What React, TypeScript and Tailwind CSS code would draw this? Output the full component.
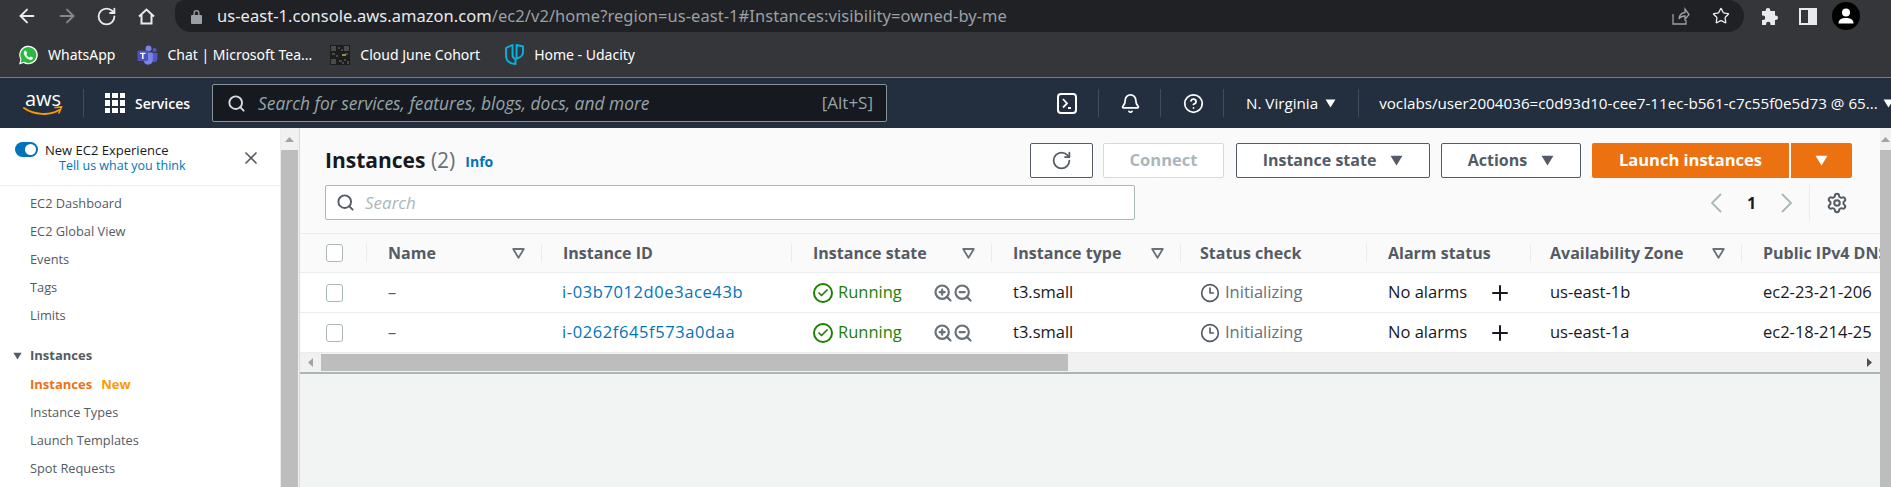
import { ArrowLeft, ArrowRight, RotateCw, Search, X, Plus, Settings, Bell, CircleHelp, Check, Clock3, Star, ZoomIn, ZoomOut } from "lucide-react";

const consoleFont = { fontFamily: '"Open Sans", "Noto Sans", sans-serif' };

const columns = "grid grid-cols-[66px_175px_250px_200px_189px_186px_164px_211px_1fr]";

const sideTop = ["EC2 Dashboard", "EC2 Global View", "Events", "Tags", "Limits"];
const sideBottom = ["Instance Types", "Launch Templates", "Spot Requests"];

const rows = [
  { id: "i-03b7012d0e3ace43b", zone: "us-east-1b", dns: "ec2-23-21-206" },
  { id: "i-0262f645f573a0daa", zone: "us-east-1a", dns: "ec2-18-214-25" },
];

function Caret({ className }: { className: string }) {
  return (
    <svg aria-hidden="true" className={className} viewBox="0 0 12 10">
      <path d="M0.5 0.5h11L6 9.5Z" fill="currentColor" />
    </svg>
  );
}

function FilterMark() {
  return (
    <svg aria-hidden="true" className="h-[11px] w-[13px] text-[#687078]" viewBox="0 0 13 11" fill="none">
      <path d="M1.2 1h10.6L6.5 9.8Z" stroke="currentColor" strokeWidth="1.8" strokeLinejoin="round" />
    </svg>
  );
}

function Checkbox() {
  return <span className="block h-[18px] w-[17px] rounded-[3px] border border-[#aab7b8] bg-white" />;
}

function HeaderCell({ label, filter, tight }: { label: string; filter?: boolean; tight?: boolean }) {
  return (
    <div className={`flex h-[18px] items-center justify-between whitespace-nowrap border-l border-[#eaeded] pr-[16px] ${tight ? "pl-[19px]" : "pl-[21px]"}`}>
      <span>{label}</span>
      {filter && <FilterMark />}
    </div>
  );
}

function Chevron({ flip }: { flip?: boolean }) {
  return (
    <svg aria-hidden="true" className="h-[20px] w-[11px] text-[#aab7b8]" viewBox="0 0 11 20" fill="none">
      <path d={flip ? "M1 1l9 9-9 9" : "M10 1l-9 9 9 9"} stroke="currentColor" strokeWidth="1.8" />
    </svg>
  );
}

function WhatsAppIcon() {
  return (
    <svg aria-hidden="true" className="h-[20px] w-[20px]" viewBox="0 0 20 20">
      <path d="M1 19.4 2.4 14.6A9.3 9.3 0 1 1 5.6 17.9Z" fill="#fff" />
      <path d="M2.5 17.8 3.6 14.3A8 8 0 1 1 6.1 16.8Z" fill="#2bb741" />
      <path d="M7.3 5.5c-.4 0-1.5.8-1.5 2.4 0 2.5 3.4 6.5 6.6 6.9 1.5.1 2.5-1 2.6-1.9 0-.4-2-1.5-2.4-1.4-.4.2-.8 1.1-1.2 1.1-.7 0-3-2.1-3.1-3-.1-.4.8-.9.8-1.4 0-.3-.8-2.6-1.8-2.7Z" fill="#fff" />
    </svg>
  );
}

function TeamsIcon() {
  return (
    <svg aria-hidden="true" className="h-[20px] w-[21px]" viewBox="0 0 21 20">
      <circle cx="11.5" cy="3.6" r="3" fill="#7b83eb" />
      <circle cx="17.6" cy="5" r="2.1" fill="#5059c9" />
      <path d="M14 8h6.4v6a3.2 3.2 0 0 1-5.5 2.2Z" fill="#5059c9" />
      <path d="M6.5 7.5h9.3V15a4.6 4.6 0 0 1-9.3 0Z" fill="#7b83eb" />
      <rect x="0.5" y="5.5" width="10.5" height="10.5" rx="1" fill="#4b53bc" />
      <path d="M3 7.8h5.5v1.3H6.500v4.900H5V9.100H3Z" fill="#fff" />
    </svg>
  );
}

function QrIcon() {
  return (
    <svg aria-hidden="true" className="h-[20px] w-[20px]" viewBox="0 0 20 20" shapeRendering="crispEdges">
      <rect width="20" height="20" fill="#1d1d1d" />
      <path d="M1 1h5v5H1ZM14 1h5v5h-5ZM1 14h5v5H1ZM8 2h2v2H8ZM11 4h2v2h-2ZM2 8h3v2H2ZM6 10h2v2H6ZM15 8h3v2h-3ZM9 15h3v2H9ZM14 14h2v2h-2ZM17 16h2v3h-2ZM12 17h2v2h-2Z" fill="#4a4a4a" />
      <rect x="12" y="9" width="4" height="2" fill="#7e9c46" />
    </svg>
  );
}

function UdacityIcon() {
  return (
    <svg aria-hidden="true" className="h-[21px] w-[21px]" viewBox="0 0 21 21" fill="none" stroke="#02b3e4" strokeWidth="1.9" strokeLinejoin="round">
      <path d="M2 4 8.500 1v9.500c0 2.500 1 4 3 4.500V20c-6-.5-9.500-3.500-9.500-8.500Z" />
      <path d="M19 2.500 12.500 1v13.500c0 0 6.500-1.500 6.500-6Z" />
    </svg>
  );
}

function AwsLogo() {
  return (
    <div className="relative flex h-[26px] w-[40px] flex-col items-center">
      <span className="text-[20px] font-normal leading-[17px] text-white" style={{ fontFamily: '"Open Sans", sans-serif' }}>aws</span>
      <svg aria-hidden="true" className="absolute bottom-0 left-0 h-[10px] w-[40px]" viewBox="0 0 40 10" fill="none">
        <path d="M1 2c10 7 26 8 35 2" stroke="#f90" strokeWidth="2" strokeLinecap="round" />
        <path d="M32 1.500 38.500 1 36 7" stroke="#f90" strokeWidth="1.600" strokeLinecap="round" />
      </svg>
    </div>
  );
}

function GridIcon() {
  return (
    <span className="grid h-[20px] w-[20px] grid-cols-3 gap-[2px]">
      {Array.from({ length: 9 }).map((_, i) => (
        <span className="bg-white" key={i} />
      ))}
    </span>
  );
}

function NavSep() {
  return <span className="block h-[28px] w-px bg-[#414d5c]" />;
}

export default function App() {
  return (
    <div className="flex h-[487px] w-[1891px] flex-col overflow-hidden bg-white" style={consoleFont}>
      {/* browser chrome */}
      <div className="flex h-[32px] items-center bg-[#35363a] text-white" style={{ fontFamily: '"Noto Sans", sans-serif' }}>
        <div className="flex w-[175px] items-center pl-[16px]">
          <ArrowLeft className="h-[22px] w-[22px] text-[#e8eaed]" strokeWidth={2.1} />
          <ArrowRight className="ml-[18px] h-[22px] w-[22px] text-[#85878a]" strokeWidth={2.1} />
          <RotateCw className="ml-[18px] h-[21px] w-[21px] text-[#e8eaed]" strokeWidth={2.1} />
          <svg aria-hidden="true" className="ml-[20px] h-[19px] w-[19px] text-[#e8eaed]" viewBox="0 0 19 19" fill="none">
            <path d="M2 9.500 9.500 2.500 17 9.500M4.500 8v8.500h10V8" stroke="currentColor" strokeWidth="2" />
          </svg>
        </div>
        <div className="flex h-[32px] w-[1569px] items-center rounded-b-[18px] rounded-tl-[10px] rounded-r-[18px] bg-[#202124] pl-[16px] pr-[14px]">
          <svg aria-hidden="true" className="h-[15px] w-[11px] text-[#9aa0a6]" viewBox="0 0 11 15">
            <path d="M2.500 6V4a3 3 0 0 1 6 0v2H10a1 1 0 0 1 1 1v7a1 1 0 0 1-1 1H1a1 1 0 0 1-1-1V7a1 1 0 0 1 1-1Zm1.300 0h3.400V4a1.700 1.700 0 0 0-3.400 0Z" fill="currentColor" />
          </svg>
          <span className="ml-[15px] whitespace-nowrap text-[16.5px] tracking-[0.05px] text-[#e8eaed]">
            us-east-1.console.aws.amazon.com<span className="text-[#9aa0a6]">/ec2/v2/home?region=us-east-1#Instances:visibility=owned-by-me</span>
          </span>
          <svg aria-hidden="true" className="ml-auto h-[18px] w-[18px] text-[#9aa0a6]" viewBox="0 0 18 18" fill="none">
            <path d="M1 7v10h13v-4M7 12c0-4 3-6.500 6-6.500V2l4 5.500-4 5V9c-3 0-5 1-6 3Z" stroke="currentColor" strokeWidth="1.300" />
          </svg>
          <Star className="ml-[22px] h-[18px] w-[18px] text-[#e8eaed]" strokeWidth={1.8} />
        </div>
        <svg aria-hidden="true" className="ml-[18px] h-[17px] w-[17px] text-[#e8eaed]" viewBox="0 0 17 17">
          <path d="M6 0a2.300 2.300 0 0 1 2.300 2.300V3H13v4.500h.7a2.300 2.300 0 0 1 0 4.600H13V17H8.500v-1a2.200 2.200 0 0 0-4.400 0v1H0v-5h1a2.200 2.200 0 0 0 0-4.500H0V3h3.700v-.7A2.300 2.300 0 0 1 6 0Z" fill="currentColor" />
        </svg>
        <span className="ml-[20px] flex h-[17px] w-[18px] border-2 border-[#e8eaed]">
          <span className="ml-auto h-full w-[7px] bg-[#e8eaed]" />
        </span>
        <span className="ml-[15px] flex h-[28px] w-[28px] items-center justify-center overflow-hidden rounded-full bg-black">
          <svg aria-hidden="true" className="h-[18px] w-[18px] text-white" viewBox="0 0 18 18">
            <circle cx="9" cy="5.500" r="4" fill="currentColor" />
            <path d="M1.500 16.500c0-4 3-5.500 7.500-5.500s7.500 1.500 7.500 5.500Z" fill="currentColor" />
          </svg>
        </span>
      </div>

      {/* bookmarks */}
      <div className="flex h-[46px] items-center border-b border-[#7a7d80] bg-[#35363a] text-[14px] text-white" style={{ fontFamily: '"Noto Sans", sans-serif' }}>
        <span className="ml-[18px] flex items-center gap-[10px]"><WhatsAppIcon />WhatsApp</span>
        <span className="ml-[22px] flex items-center gap-[9px]"><TeamsIcon />Chat | Microsoft Tea...</span>
        <span className="ml-[18px] flex items-center gap-[10px]"><QrIcon />Cloud June Cohort</span>
        <span className="ml-[24px] flex items-center gap-[9px]"><UdacityIcon />Home - Udacity</span>
      </div>

      {/* aws nav */}
      <div className="flex h-[50px] items-center bg-[#232f3e] text-[15.2px] text-white [&>*]:shrink-0">
        <div className="ml-[23px] w-[60px]"><AwsLogo /></div>
        <NavSep />
        <div className="ml-[21px]"><GridIcon /></div>
        <span className="ml-[10px] w-[66px] text-[14px] font-semibold">Services</span>
        <div className="ml-[11px] flex h-[38px] w-[675px] items-center rounded-[2px] border border-[#879596] bg-[#16191f] pl-[14px] pr-[13px]">
          <Search className="h-[19px] w-[19px] text-[#d5dbdb]" strokeWidth={2.4} />
          <span className="ml-[12px] text-[17.4px] italic text-[#95a5a6]">Search for services, features, blogs, docs, and more</span>
          <span className="ml-auto text-[17px] text-[#95a5a6]">[Alt+S]</span>
        </div>
        <div className="ml-[170px]">
          <svg aria-hidden="true" className="h-[21px] w-[20px]" viewBox="0 0 20 21" fill="none">
            <rect x="1" y="1" width="18" height="19" rx="3" stroke="#fff" strokeWidth="2" />
            <path d="M6 6l4 4.500-4 4M11 15h3" stroke="#fff" strokeWidth="1.800" />
          </svg>
        </div>
        <div className="ml-[21px]"><NavSep /></div>
        <Bell className="ml-[21px] h-[21px] w-[21px]" strokeWidth={2} />
        <div className="ml-[19px]"><NavSep /></div>
        <CircleHelp className="ml-[22px] h-[21px] w-[21px]" strokeWidth={2} />
        <div className="ml-[19px]"><NavSep /></div>
        <span className="ml-[22px] whitespace-nowrap">N. Virginia</span>
        <Caret className="ml-[7px] h-[9px] w-[11px]" />
        <div className="ml-[22px]"><NavSep /></div>
        <span className="ml-[20px] whitespace-nowrap">voclabs/user2004036=c0d93d10-cee7-11ec-b561-c7c55f0e5d73 @ 65...</span>
        <Caret className="ml-[5px] h-[9px] w-[11px]" />
      </div>

      <div className="flex min-h-0 flex-1">
        {/* side nav */}
        <aside className="w-[281px] shrink-0 border-r border-[#eaeded] bg-white text-[14px] text-[#545b64]">
          <div className="flex h-[58px] border-b border-[#eaeded] pl-[15px] pt-[14px]">
            <span className="flex h-[15px] w-[23px] items-center justify-end rounded-full bg-[#0073bb] pr-[2px]">
              <span className="h-[11px] w-[11px] rounded-full bg-white" />
            </span>
            <div className="ml-[7px] w-[180px] text-[13px] leading-[16px]">
              <p className="text-[#16191f]">New EC2 Experience</p>
              <p className="pl-[14px] text-[12.5px] text-[#0073bb]">Tell us what you think</p>
            </div>
            <X className="ml-[16px] mt-[6px] h-[20px] w-[20px] text-[#545b64]" strokeWidth={2} />
          </div>
          <div className="pl-[30px] pt-[4px]">
            {sideTop.map((item) => (
              <div className="flex h-[28px] items-center text-[12.8px]" key={item}>{item}</div>
            ))}
          </div>
          <div className="mt-[12px] flex h-[28px] items-center pl-[13px] text-[13px] font-bold">
            <Caret className="h-[8px] w-[9px]" />
            <span className="ml-[8px]">Instances</span>
          </div>
          <div className="pl-[30px] pt-[1px]">
            <div className="flex h-[28px] items-center gap-[9px] text-[13px] font-bold">
              <span className="text-[#ec7211]">Instances</span>
              <span className="text-[#ff9900]">New</span>
            </div>
            {sideBottom.map((item) => (
              <div className="flex h-[28px] items-center text-[12.8px]" key={item}>{item}</div>
            ))}
          </div>
        </aside>

        {/* left page scrollbar */}
        <div className="flex w-[19px] shrink-0 flex-col items-center border-r border-[#d5dbdb] bg-[#f1f1f1] pr-[1px]">
          <div className="flex h-[22px] w-full items-center justify-center">
            <svg aria-hidden="true" className="h-[5px] w-[9px] text-[#a3a3a3]" viewBox="0 0 9 5"><path d="M4.500 0 9 5H0Z" fill="currentColor" /></svg>
          </div>
          <div className="w-full flex-1 bg-[#bdbdbd]" />
        </div>

        {/* content */}
        <main className="flex min-w-0 flex-1 flex-col bg-[#f2f3f3]">
          <div className="bg-[#fafafa]">
            <div className="flex items-center pl-[25px] pr-[28px] pt-[14px]">
              <h1 className="whitespace-nowrap text-[21px] font-bold leading-[36px] text-[#16191f]">
                Instances <span className="font-normal text-[#687078]">(2)</span>
              </h1>
              <span className="ml-[10px] mt-[2px] text-[14px] font-bold text-[#0073bb]">Info</span>
              <div className="ml-auto flex h-[35px] text-[16px] font-bold">
                <button className="flex w-[63px] items-center justify-center rounded-[2px] border border-[#545b64] bg-white text-[#545b64]" type="button">
                  <RotateCw className="h-[21px] w-[21px]" strokeWidth={2} />
                </button>
                <button className="ml-[10px] w-[121px] rounded-[2px] border border-[#d5dbdb] bg-white text-[16.500px] text-[#aab7b8]" type="button">Connect</button>
                <button className="ml-[12px] flex w-[194px] items-center justify-center gap-[14px] rounded-[2px] border border-[#545b64] bg-white text-[#545b64]" type="button">
                  Instance state <Caret className="h-[11px] w-[13px]" />
                </button>
                <button className="ml-[11px] flex w-[140px] items-center justify-center gap-[14px] rounded-[2px] border border-[#545b64] bg-white text-[#545b64]" type="button">
                  Actions <Caret className="h-[11px] w-[13px]" />
                </button>
                <button className="ml-[11px] w-[197px] rounded-l-[2px] bg-[#ec7211] text-[16.500px] text-white" type="button">Launch instances</button>
                <button className="ml-[2px] flex w-[61px] items-center justify-center rounded-r-[2px] bg-[#ec7211] text-white" type="button">
                  <Caret className="h-[11px] w-[13px]" />
                </button>
              </div>
            </div>
            <div className="flex h-[55px] items-start pl-[25px] pr-[28px] pt-[7px]">
              <div className="flex h-[35px] w-[810px] items-center rounded-[2px] border border-[#aab7b8] bg-white pl-[10px]">
                <Search className="h-[19px] w-[19px] text-[#545b64]" strokeWidth={2.4} />
                <span className="ml-[10px] text-[17px] italic text-[#aab7b8]">Search</span>
              </div>
              <div className="ml-auto mr-[4px] flex h-[35px] items-center">
                <Chevron />
                <span className="ml-[25px] w-[9px] text-center text-[16px] font-bold text-[#16191f]">1</span>
                <span className="ml-[25px]"><Chevron flip /></span>
                <span className="ml-[17px] h-[35px] w-px bg-[#eaeded]" />
                <Settings className="ml-[16px] h-[22px] w-[22px] text-[#545b64]" strokeWidth={2.2} />
              </div>
            </div>
          </div>

          {/* instances table */}
          <div className="overflow-hidden whitespace-nowrap text-[16.5px]">
            <div className={`${columns} h-[40px] items-center border-y border-[#eaeded] bg-[#fafafa] text-[16px] font-bold text-[#545b64]`}>
              <div className="pl-[26px]"><Checkbox /></div>
              <HeaderCell label="Name" filter />
              <HeaderCell label="Instance ID" />
              <HeaderCell label="Instance state" filter />
              <HeaderCell label="Instance type" filter />
              <HeaderCell label="Status check" tight />
              <HeaderCell label="Alarm status" />
              <HeaderCell label="Availability Zone" filter tight />
              <HeaderCell label="Public IPv4 DNS" />
            </div>
            {rows.map((row) => (
              <div className={`${columns} h-[40px] items-center border-b border-[#eaeded] bg-white text-[#16191f]`} key={row.id}>
                <div className="pl-[26px]"><Checkbox /></div>
                <div className="pl-[22px] text-[#545b64]">–</div>
                <div className="pl-[21px] tracking-[0.6px] text-[#0073bb]">{row.id}</div>
                <div className="flex items-center pl-[22px] pr-[18px]">
                  <span className="flex h-[20px] w-[20px] items-center justify-center rounded-full border-2 border-[#1d8102]">
                    <Check className="h-[12px] w-[12px] text-[#1d8102]" strokeWidth={3.5} />
                  </span>
                  <span className="ml-[5px] text-[#1d8102]">Running</span>
                  <span className="ml-auto flex text-[#687078]">
                    <ZoomIn className="h-[20px] w-[20px]" strokeWidth={2.6} />
                    <ZoomOut className="h-[20px] w-[20px]" strokeWidth={2.6} />
                  </span>
                </div>
                <div className="pl-[22px]">t3.small</div>
                <div className="flex items-center pl-[20px] text-[#687078]">
                  <Clock3 className="h-[20px] w-[20px] text-[#545b64]" strokeWidth={2} />
                  <span className="ml-[5px]">Initializing</span>
                </div>
                <div className="flex items-center pl-[22px]">
                  No alarms
                  <Plus className="ml-[21px] h-[24px] w-[24px]" strokeWidth={2} />
                </div>
                <div className="pl-[20px]">{row.zone}</div>
                <div className="pl-[22px]">{row.dns}</div>
              </div>
            ))}
          </div>

          {/* table horizontal scrollbar */}
          <div className="flex h-[21px] items-center border-b-2 border-[#aab7b8] bg-[#f1f1f1]">
            <svg aria-hidden="true" className="ml-[8px] h-[9px] w-[5px] text-[#a3a3a3]" viewBox="0 0 5 9"><path d="M5 0v9L0 4.500Z" fill="currentColor" /></svg>
            <div className="ml-[8px] h-[17px] w-[747px] bg-[#bdbdbd]" />
            <svg aria-hidden="true" className="ml-auto mr-[8px] h-[9px] w-[5px] text-[#505050]" viewBox="0 0 5 9"><path d="M0 0v9L5 4.500Z" fill="currentColor" /></svg>
          </div>
        </main>

        {/* right page scrollbar */}
        <div className="flex w-[11px] shrink-0 flex-col bg-[#f1f1f1]">
          <div className="flex h-[22px] items-center justify-center">
            <svg aria-hidden="true" className="h-[5px] w-[9px] text-[#a3a3a3]" viewBox="0 0 9 5"><path d="M4.500 0 9 5H0Z" fill="currentColor" /></svg>
          </div>
          <div className="flex-1 bg-[#bdbdbd]" />
        </div>
      </div>
    </div>
  );
}
